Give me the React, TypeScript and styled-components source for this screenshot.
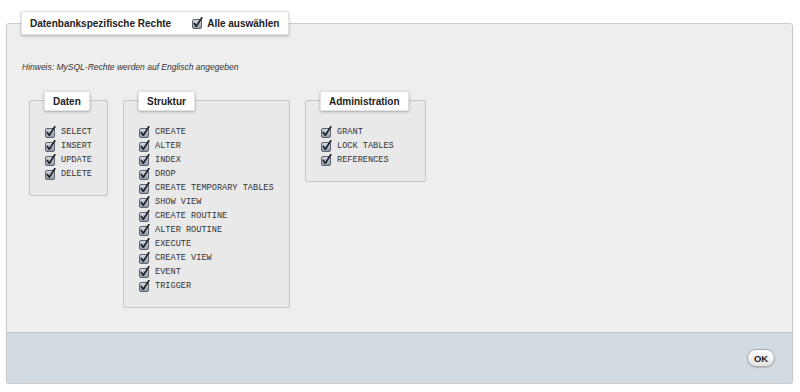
import React from "react";
import styled, { createGlobalStyle } from "styled-components";

/**CSS *******************************************/
const GlobalStyle = createGlobalStyle`
    html, body {
        margin: 0;
        padding: 0;
        background: #fff;
        font-family: "Liberation Sans", Arial, sans-serif;
    }
`;
const DivPage = styled.div`
    padding: 11px 7px 0 6px;
`;
const DivOuterBox = styled.div`
    margin-top: 12px;
    border: 1px solid #cbcbcb;
    border-radius: 3px;
    background: #eeeeee;
    box-shadow: 0 2px 3px rgba(0, 0, 0, 0.08);
`;
const DivLegend = styled.div<{ $small?: boolean }>`
    display: flex;
    width: fit-content;
    align-items: center;
    gap: 21px;
    box-sizing: border-box;
    background: #fff;
    border: 1px solid #e2e2e2;
    border-radius: 2px;
    box-shadow: 0 1px 3px rgba(0, 0, 0, 0.28);
    color: #222;
    font-weight: bold;
    font-size: 10px;
    height: ${p => (p.$small ? "20px" : "24px")};
    padding: ${p => (p.$small ? "0 8px" : "0 9px 0 8px")};
    margin: ${p => (p.$small ? "-10px 0 0 14px" : "-13px 0 0 14px")};
`;
const LabelSelectAll = styled.label`
    display: inline-flex;
    align-items: center;
    gap: 4px;
`;
const DivBody = styled.div`
    padding: 27px 15px 24px 15px;
`;
const PHint = styled.p`
    margin: 0 0 28px 0;
    font-size: 8.5px;
    line-height: 10px;
    font-style: italic;
    color: #333;
`;
const DivGroups = styled.div`
    display: flex;
    align-items: flex-start;
    gap: 15px;
    padding-left: 7px;
`;
const DivGroup = styled.div<{ $width: number }>`
    width: ${p => p.$width}px;
    box-sizing: border-box;
    border: 1px solid #c6c6c6;
    border-radius: 2px;
    background: #e9e9e9;
`;
const UlItems = styled.ul`
    list-style: none;
    margin: 0;
    padding: 14px 0 14px 15px;
`;
const LiItem = styled.li`
    display: flex;
    align-items: center;
    gap: 5px;
    height: 14px;
    font-family: "Liberation Mono", "Courier New", monospace;
    font-size: 8.6px;
    color: #333;
    white-space: nowrap;
`;
const DivFooter = styled.div`
    display: flex;
    justify-content: flex-end;
    align-items: center;
    height: 50px;
    padding-right: 17px;
    border-top: 1px solid #c4c4c4;
    background: #d3dbe2;
    border-radius: 0 0 3px 3px;
`;
const ButtonOk = styled.button`
    width: 28px;
    height: 18px;
    padding: 0;
    border: 1px solid #a9a9a9;
    border-radius: 9px;
    background: linear-gradient(#ffffff, #e4e4e4);
    box-shadow: 0 1px 1px rgba(0, 0, 0, 0.15);
    font-family: "Liberation Sans", Arial, sans-serif;
    font-weight: bold;
    font-size: 9.5px;
    color: #222;
`;
/**CSS end****************************************/

const CheckBox = () => (
    <svg width="11" height="12" viewBox="0 0 11 12">
        <defs>
            <linearGradient id="cbFill" x1="0" y1="0" x2="0" y2="1">
                <stop offset="0" stopColor="#d8dde5" />
                <stop offset="1" stopColor="#8e98a8" />
            </linearGradient>
        </defs>
        <rect x="0.5" y="2.5" width="9" height="9" rx="1.5" fill="url(#cbFill)" stroke="#5b626d" />
        <path d="M2.3 6.4 L4.3 9.2 L9.8 0.8" fill="none" stroke="#1e2228" strokeWidth="1.7" strokeLinecap="round" strokeLinejoin="round" />
    </svg>
);

type GroupProps = {
    title: string;
    width: number;
    items: string[];
};

const PrivilegeGroup = (props: GroupProps) => (
    <DivGroup $width={props.width}>
        <DivLegend $small>{props.title}</DivLegend>
        <UlItems>
            {props.items.map(item => (
                <LiItem key={item}>
                    <CheckBox />
                    {item}
                </LiItem>
            ))}
        </UlItems>
    </DivGroup>
);

const App = () => {
    return (
        <DivPage>
            <GlobalStyle />
            <DivOuterBox>
                <DivLegend>
                    <span>Datenbankspezifische Rechte</span>
                    <LabelSelectAll>
                        <CheckBox />
                        Alle auswählen
                    </LabelSelectAll>
                </DivLegend>
                <DivBody>
                    <PHint>Hinweis: MySQL-Rechte werden auf Englisch angegeben</PHint>
                    <DivGroups>
                        <PrivilegeGroup title="Daten" width={79} items={["SELECT", "INSERT", "UPDATE", "DELETE"]} />
                        <PrivilegeGroup
                            title="Struktur"
                            width={167}
                            items={[
                                "CREATE",
                                "ALTER",
                                "INDEX",
                                "DROP",
                                "CREATE TEMPORARY TABLES",
                                "SHOW VIEW",
                                "CREATE ROUTINE",
                                "ALTER ROUTINE",
                                "EXECUTE",
                                "CREATE VIEW",
                                "EVENT",
                                "TRIGGER",
                            ]}
                        />
                        <PrivilegeGroup title="Administration" width={121} items={["GRANT", "LOCK TABLES", "REFERENCES"]} />
                    </DivGroups>
                </DivBody>
                <DivFooter>
                    <ButtonOk>OK</ButtonOk>
                </DivFooter>
            </DivOuterBox>
        </DivPage>
    );
};

export default App;
